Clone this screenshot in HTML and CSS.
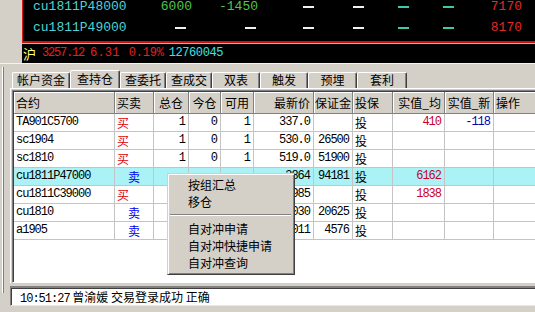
FILE: index.html
```html
<!DOCTYPE html>
<html lang="zh-CN">
<head>
<meta charset="utf-8">
<title>查持仓</title>
<link rel="stylesheet" href="styles.css">
</head>
<body>
<div class="top">
  <div class="quote">
    <div class="qrows">
      <div class="qrow">
        <span class="qname">cu1811P48000</span>
        <span class="qc green">6000</span>
        <span class="qc green">-1450</span>
        <span class="qc"><i class="dash white"></i></span>
        <span class="qc"><i class="dash white"></i></span>
        <span class="qc"><i class="dash cyan"></i></span>
        <span class="qc"><i class="dash cyan"></i></span>
        <span class="qc red">7170</span>
      </div>
      <div class="qrow">
        <span class="qname">cu1811P49000</span>
        <span class="qc pr6"><i class="dash white"></i></span>
        <span class="qc pr2"><i class="dash white"></i></span>
        <span class="qc"><i class="dash white"></i></span>
        <span class="qc"><i class="dash white"></i></span>
        <span class="qc"><i class="dash cyan"></i></span>
        <span class="qc"><i class="dash cyan"></i></span>
        <span class="qc red">8170</span>
      </div>
    </div>
  </div>
  <div class="index">
    <span class="idx-name">沪</span>
    <span class="idx-red i1">3257.12</span>
    <span class="idx-red i2">6.31</span>
    <span class="idx-red i3">0.19%</span>
    <span class="idx-cyan i4">12760045</span>
  </div>
</div>

<div class="lower">
  <div class="tabs">
    <div class="tab w1">帐户资金</div>
    <div class="tab active w2">查持仓</div>
    <div class="tab w3">查委托</div>
    <div class="tab w4">查成交</div>
    <div class="tab w5">双表</div>
    <div class="tab w6">触发</div>
    <div class="tab w7">预埋</div>
    <div class="tab w8">套利</div>
  </div>
  <div class="pane">
    <div class="sunk">
      <div class="grid">
        <div class="row head">
          <div class="c l">合约</div>
          <div class="c l">买卖</div>
          <div class="c ctr">总仓</div>
          <div class="c ctr">今仓</div>
          <div class="c ctr">可用</div>
          <div class="c r">最新价</div>
          <div class="c ctr">保证金</div>
          <div class="c l">投保</div>
          <div class="c r">实值_均</div>
          <div class="c ctr">实值_新</div>
          <div class="c l">操作</div>
        </div>
        <div class="row">
          <div class="c l mono">TA901C5700</div>
          <div class="c l buy">买</div>
          <div class="c r mono">1</div>
          <div class="c r mono">0</div>
          <div class="c r mono">1</div>
          <div class="c r mono">337.0</div>
          <div class="c r mono"></div>
          <div class="c l">投</div>
          <div class="c r mono dred">410</div>
          <div class="c r mono dblue">-118</div>
          <div class="c"></div>
        </div>
        <div class="row">
          <div class="c l mono">sc1904</div>
          <div class="c l buy">买</div>
          <div class="c r mono">1</div>
          <div class="c r mono">0</div>
          <div class="c r mono">1</div>
          <div class="c r mono">530.0</div>
          <div class="c r mono">26500</div>
          <div class="c l">投</div>
          <div class="c r mono"></div>
          <div class="c r mono"></div>
          <div class="c"></div>
        </div>
        <div class="row">
          <div class="c l mono">sc1810</div>
          <div class="c l buy">买</div>
          <div class="c r mono">1</div>
          <div class="c r mono">0</div>
          <div class="c r mono">1</div>
          <div class="c r mono">519.0</div>
          <div class="c r mono">51900</div>
          <div class="c l">投</div>
          <div class="c r mono"></div>
          <div class="c r mono"></div>
          <div class="c"></div>
        </div>
        <div class="row sel">
          <div class="c l mono">cu1811P47000</div>
          <div class="c ctr sell">卖</div>
          <div class="c r mono"></div>
          <div class="c r mono"></div>
          <div class="c r mono"></div>
          <div class="c r mono">3864</div>
          <div class="c r mono">94181</div>
          <div class="c l">投</div>
          <div class="c r mono dred">6162</div>
          <div class="c r mono"></div>
          <div class="c"></div>
        </div>
        <div class="row">
          <div class="c l mono">cu1811C39000</div>
          <div class="c l buy">买</div>
          <div class="c r mono"></div>
          <div class="c r mono"></div>
          <div class="c r mono"></div>
          <div class="c r mono">1985</div>
          <div class="c r mono"></div>
          <div class="c l">投</div>
          <div class="c r mono dred">1838</div>
          <div class="c r mono"></div>
          <div class="c"></div>
        </div>
        <div class="row">
          <div class="c l mono">cu1810</div>
          <div class="c ctr sell">卖</div>
          <div class="c r mono"></div>
          <div class="c r mono"></div>
          <div class="c r mono"></div>
          <div class="c r mono">1030</div>
          <div class="c r mono">20625</div>
          <div class="c l">投</div>
          <div class="c r mono"></div>
          <div class="c r mono"></div>
          <div class="c"></div>
        </div>
        <div class="row">
          <div class="c l mono">a1905</div>
          <div class="c ctr sell">卖</div>
          <div class="c r mono"></div>
          <div class="c r mono"></div>
          <div class="c r mono"></div>
          <div class="c r mono">3011</div>
          <div class="c r mono">4576</div>
          <div class="c l">投</div>
          <div class="c r mono"></div>
          <div class="c r mono"></div>
          <div class="c"></div>
        </div>
      </div>
    </div>
  </div>
  <div class="status">
    <span class="mono">10:51:27</span> 曾渝媛 交易登录成功 正确
  </div>

  <div class="menu">
    <div class="mi">按组汇总</div>
    <div class="mi">移仓</div>
    <div class="msep"></div>
    <div class="mi">自对冲申请</div>
    <div class="mi">自对冲快捷申请</div>
    <div class="mi">自对冲查询</div>
  </div>
</div>
</body>
</html>
```

FILE: styles.css
```css
html, body {
  margin: 0;
  padding: 0;
}
body {
  width: 535px;
  height: 312px;
  overflow: hidden;
  background: #d4d0c8;
  font-family: "Noto Sans CJK SC", "Liberation Sans", sans-serif;
  font-size: 12px;
  color: #000;
  position: relative;
}

/* ---------- top quote panel ---------- */
.top {
  padding-left: 22px;
  border-bottom: 1px solid #f4f4f4;
}
.quote {
  background: #000;
  height: 41px;
  border-left: 1px solid #d81818;
  border-bottom: 2px solid #cc1010;
  overflow: hidden;
}
.qrows {
  margin-top: -4px;
}
.qrow {
  display: grid;
  grid-template-columns: 127px 42px 66px 56px 50px 45px 45px 68px;
  height: 21px;
  line-height: 21px;
  font-family: "Liberation Mono", monospace;
  font-size: 13px;
}
.qname {
  padding-left: 10px;
  color: #4cd4d4;
}
.qc {
  text-align: right;
}
.pr6 { padding-right: 6px; }
.pr2 { padding-right: 2px; }
.green { color: #4cc84c; }
.red { color: #e42828; }
.dash {
  display: inline-block;
  width: 11px;
  height: 2px;
  vertical-align: middle;
}
.dash.white { background: #f0f0f0; }
.dash.cyan { background: #40c8a8; }

.index {
  background: #000;
  height: 19px;
  line-height: 19px;
  border-top: 1px solid #f4a4a4;
  display: flex;
  font-family: "Liberation Mono", monospace;
  font-size: 12px;
  white-space: nowrap;
}
.idx-name {
  font-family: "Noto Sans CJK SC", sans-serif;
  font-size: 13px;
  color: #ffff88;
  padding-left: 1px;
}
.idx-red { color: #e42020; letter-spacing: -1.2px; }
.idx-cyan { color: #40e0e0; letter-spacing: -0.4px; }
.i1 { margin-left: 6px; }
.i2 { margin-left: 6px; letter-spacing: 0.2px; }
.i3 { margin-left: 9px; letter-spacing: -0.2px; }
.i4 { margin-left: 5px; }

/* ---------- lower part ---------- */
.lower {
  padding-left: 10px;
  background-image:
    linear-gradient(to right, transparent 2px, #ffffff 2px, #ffffff 3px, #808080 3px, #808080 4px, transparent 4px);
  background-repeat: no-repeat;
  background-position: 0 3px;
  background-size: 6px 226px;
}

.tabs {
  display: flex;
  align-items: flex-end;
  height: 18px;
  padding-top: 6px;
  padding-left: 2px;
}
.tab {
  box-sizing: border-box;
  height: 16px;
  line-height: 14px;
  text-align: center;
  border-top: 1px solid #fff;
  border-left: 1px solid #fff;
  border-right: 1px solid #404040;
  box-shadow: inset -1px 0 0 #808080;
  border-radius: 2px 2px 0 0;
  white-space: nowrap;
}
.tab.active {
  height: 18px;
  line-height: 16px;
  position: relative;
}
.w1 { width: 58px; }
.w2 { width: 50px; }
.w3 { width: 46px; }
.w4 { width: 46px; }
.w5 { width: 48px; }
.w6 { width: 48px; }
.w7 { width: 49px; }
.w8 { width: 50px; }

.pane {
  border-top: 1px solid #fff;
  border-left: 1px solid #fff;
  padding: 1px 0 0 1px;
}
.sunk {
  border-top: 1px solid #808080;
  border-left: 1px solid #808080;
  border-bottom: 1px solid #fff;
}
.grid {
  border-top: 1px solid #404040;
  border-left: 1px solid #404040;
  background: #fff;
  height: 190px;
  overflow: hidden;
}
.row {
  display: grid;
  grid-template-columns: 101px 39px 35px 32px 33px 60px 39px 40px 52px 49px 60px;
  height: 18px;
}
.c {
  box-sizing: border-box;
  border-right: 1px solid #c4c4c4;
  border-bottom: 1px solid #c4c4c4;
  line-height: 17px;
  white-space: nowrap;
  overflow: hidden;
}
.row.head {
  height: 22px;
}
.row.head .c {
  background: #d4d0c8;
  border-right: 1px solid #808080;
  border-bottom: 1px solid #808080;
  box-shadow: inset 1px 1px 0 #fff;
  line-height: 21px;
}
.row.sel .c {
  background: #aaf2f6;
}
.l { padding-left: 2px; }
.r { text-align: right; padding-right: 3px; }
.ctr { text-align: center; }
.mono {
  font-family: "Liberation Mono", monospace;
  font-size: 12px;
  letter-spacing: -1px;
}
.buy { color: #e00000; }
.sell { color: #0000f0; }
.dred { color: #c80028; }
.dblue { color: #0000b0; }

/* ---------- status bar ---------- */
.status {
  margin-top: 3px;
  height: 16px;
  line-height: 16px;
  background: #fff;
  border-top: 2px solid #808080;
  box-shadow: inset 0 1px 0 #404040, inset 1px 0 0 #404040;
  border-left: 1px solid #808080;
  border-bottom: 1px solid #e8e8e8;
  padding: 1px 0 0 9px;
  white-space: nowrap;
}

/* ---------- context menu (overlay) ---------- */
.menu {
  position: absolute;
  left: 167px;
  top: 173px;
  width: 128px;
  box-sizing: border-box;
  background: #d4d0c8;
  border-top: 1px solid #d4d0c8;
  border-left: 1px solid #d4d0c8;
  border-right: 1px solid #404040;
  border-bottom: 1px solid #404040;
  box-shadow: inset 1px 1px 0 #fff, inset -1px -1px 0 #808080;
  padding: 2px 2px 3px 2px;
}
.mi {
  height: 17px;
  line-height: 17px;
  padding-left: 18px;
  white-space: nowrap;
}
.msep {
  height: 0;
  margin: 4px 1px 4px 0;
  border-top: 1px solid #808080;
  border-bottom: 1px solid #fff;
}
```
